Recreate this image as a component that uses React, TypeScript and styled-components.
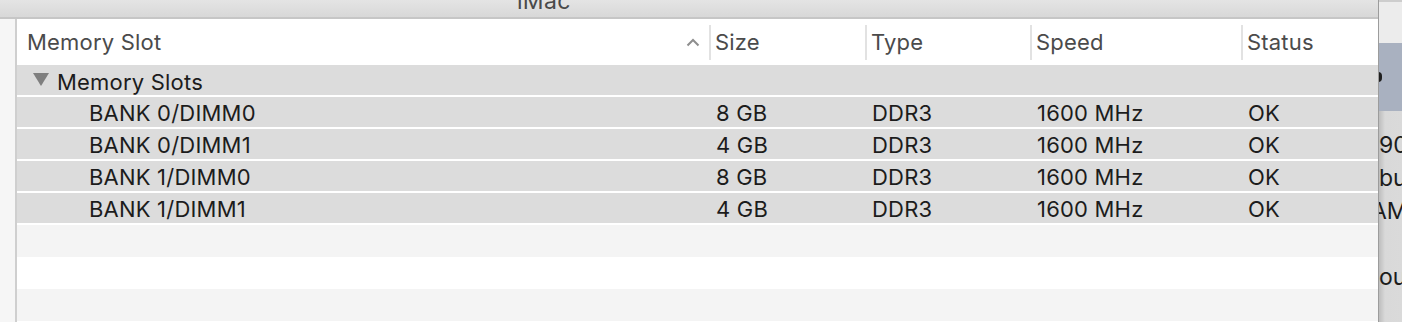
import React from 'react'
import styled, { createGlobalStyle } from 'styled-components'

interface Slot {
  name: string
  size: string
  type: string
  speed: string
  status: string
}

const SLOTS: Slot[] = [
  { name: 'BANK 0/DIMM0', size: '8 GB', type: 'DDR3', speed: '1600 MHz', status: 'OK' },
  { name: 'BANK 0/DIMM1', size: '4 GB', type: 'DDR3', speed: '1600 MHz', status: 'OK' },
  { name: 'BANK 1/DIMM0', size: '8 GB', type: 'DDR3', speed: '1600 MHz', status: 'OK' },
  { name: 'BANK 1/DIMM1', size: '4 GB', type: 'DDR3', speed: '1600 MHz', status: 'OK' },
]

const COLUMNS = '692px 156px 165px 211px 1fr'

const App: React.FC = () => {
  return (
    <>
      <GlobalStyle />
      <Screen>
        <Window>
          <TitleBar>
            <TitleText>iMac</TitleText>
          </TitleBar>
          <Body>
            <Sidebar />
            <Table>
              <HeaderRow>
                <HeaderCell first>
                  <HeaderLabel>Memory Slot</HeaderLabel>
                  <svg width="14" height="9" viewBox="0 0 14 9">
                    <polyline points="1.5,7.5 7,2 12.5,7.5" fill="none" stroke="#8e8e8e" strokeWidth="2" />
                  </svg>
                </HeaderCell>
                {['Size', 'Type', 'Speed', 'Status'].map((label) => (
                  <HeaderCell key={label}>
                    <Divider />
                    <HeaderLabel>{label}</HeaderLabel>
                  </HeaderCell>
                ))}
              </HeaderRow>

              <Row>
                <GroupCell>
                  <Disclosure />
                  Memory Slots
                </GroupCell>
              </Row>

              {SLOTS.map((s) => (
                <Row key={s.name}>
                  <Cell indent={72}>{s.name}</Cell>
                  <Cell>{s.size}</Cell>
                  <Cell>{s.type}</Cell>
                  <Cell>{s.speed}</Cell>
                  <Cell>{s.status}</Cell>
                </Row>
              ))}

              <EmptyRow striped />
              <EmptyRow />
              <EmptyRow striped />
            </Table>
          </Body>
        </Window>

        <BackWindow>
          <BackTop />
          <BackSelected>
            <Chevron />
          </BackSelected>
          <BackText>
            <BackLine>90</BackLine>
            <BackLine>bu</BackLine>
            <BackLine shift={-8}>AM</BackLine>
            <BackLine />
            <BackLine>ou</BackLine>
          </BackText>
        </BackWindow>
      </Screen>
    </>
  )
}

export default App

// ---------- styles ----------
const GlobalStyle = createGlobalStyle`
  html, body {
    margin: 0;
    padding: 0;
    overflow: hidden;
    background: #fff;
  }
  body {
    font-family: Inter, "Noto Sans", "Liberation Sans", sans-serif;
  }
`

const Screen = styled.div`
  display: flex;
  width: 1402px;
  height: 322px;
  overflow: hidden;
`

const Window = styled.div`
  width: 1378px;
  flex-shrink: 0;
  display: flex;
  flex-direction: column;
  background: #fff;
`

const TitleBar = styled.div`
  height: 17px;
  border-bottom: 2px solid #c6c6c6;
  background: linear-gradient(#e4e4e4, #d8d8d8);
  overflow: hidden;
  padding-left: 517px;
`

const TitleText = styled.div`
  font-size: 23px;
  line-height: 23px;
  margin-top: -10px;
  letter-spacing: 0.3px;
  color: #4a4a4a;
`

const Body = styled.div`
  flex: 1;
  display: flex;
`

const Sidebar = styled.div`
  width: 15px;
  background: #f6f6f6;
  border-right: 2px solid #cfcfcf;
`

const Table = styled.div`
  flex: 1;
  display: flex;
  flex-direction: column;
  font-size: 22px;
  letter-spacing: 0.2px;
`

const HeaderRow = styled.div`
  display: grid;
  grid-template-columns: ${COLUMNS};
  height: 46px;
  background: #fff;
`

const HeaderCell = styled.div<{ first?: boolean }>`
  display: flex;
  align-items: center;
  justify-content: ${(p) => (p.first ? 'space-between' : 'flex-start')};
  padding: ${(p) => (p.first ? '0 9px 0 10px' : '0')};
`

const HeaderLabel = styled.span`
  color: #4b4b4b;
  margin-left: 4px;
  &:first-child {
    margin-left: 0;
  }
`

const Divider = styled.div`
  width: 2px;
  height: 35px;
  background: #e2e2e2;
`

const Row = styled.div`
  display: grid;
  grid-template-columns: ${COLUMNS};
  height: 30px;
  background: #dcdcdc;
  border-bottom: 2px solid #fff;
  color: #1c1c1c;
`

const Cell = styled.div<{ indent?: number }>`
  display: flex;
  align-items: center;
  padding-left: ${(p) => p.indent ?? 7}px;
  padding-top: 1px;
  white-space: nowrap;
`

const GroupCell = styled.div`
  display: flex;
  align-items: center;
  padding-left: 16px;
  padding-top: 3px;
  white-space: nowrap;
`

const Disclosure = styled.span`
  width: 0;
  height: 0;
  border-left: 8px solid transparent;
  border-right: 8px solid transparent;
  border-top: 13px solid #7f7f7f;
  margin-right: 8px;
  margin-top: -4px;
`

const EmptyRow = styled.div<{ striped?: boolean }>`
  height: 32px;
  background: ${(p) => (p.striped ? '#f4f4f4' : '#fff')};
`

const BackWindow = styled.div`
  flex: 1;
  display: flex;
  flex-direction: column;
  border-left: 1px solid #9c9c9c;
  background: linear-gradient(90deg, #bdbdbd, #d9d9d9 6px, #dadada);
  overflow: hidden;
`

const BackTop = styled.div`
  height: 41px;
  border-top: 2px solid #cdcdcd;
  background: #ececec;
`

const BackSelected = styled.div`
  height: 68px;
  background: #a9b1c0;
  display: flex;
  align-items: center;
`

const Chevron = styled.span`
  width: 4px;
  height: 10px;
  background: #1f1f1f;
  border-radius: 0 5px 5px 0;
  margin-left: -1px;
`

const BackText = styled.div`
  padding-top: 18px;
  font-size: 23px;
  line-height: 33px;
  color: #1c1c1c;
`

const BackLine = styled.div<{ shift?: number }>`
  height: 33px;
  white-space: nowrap;
  margin-left: ${(p) => p.shift ?? 0}px;
`
